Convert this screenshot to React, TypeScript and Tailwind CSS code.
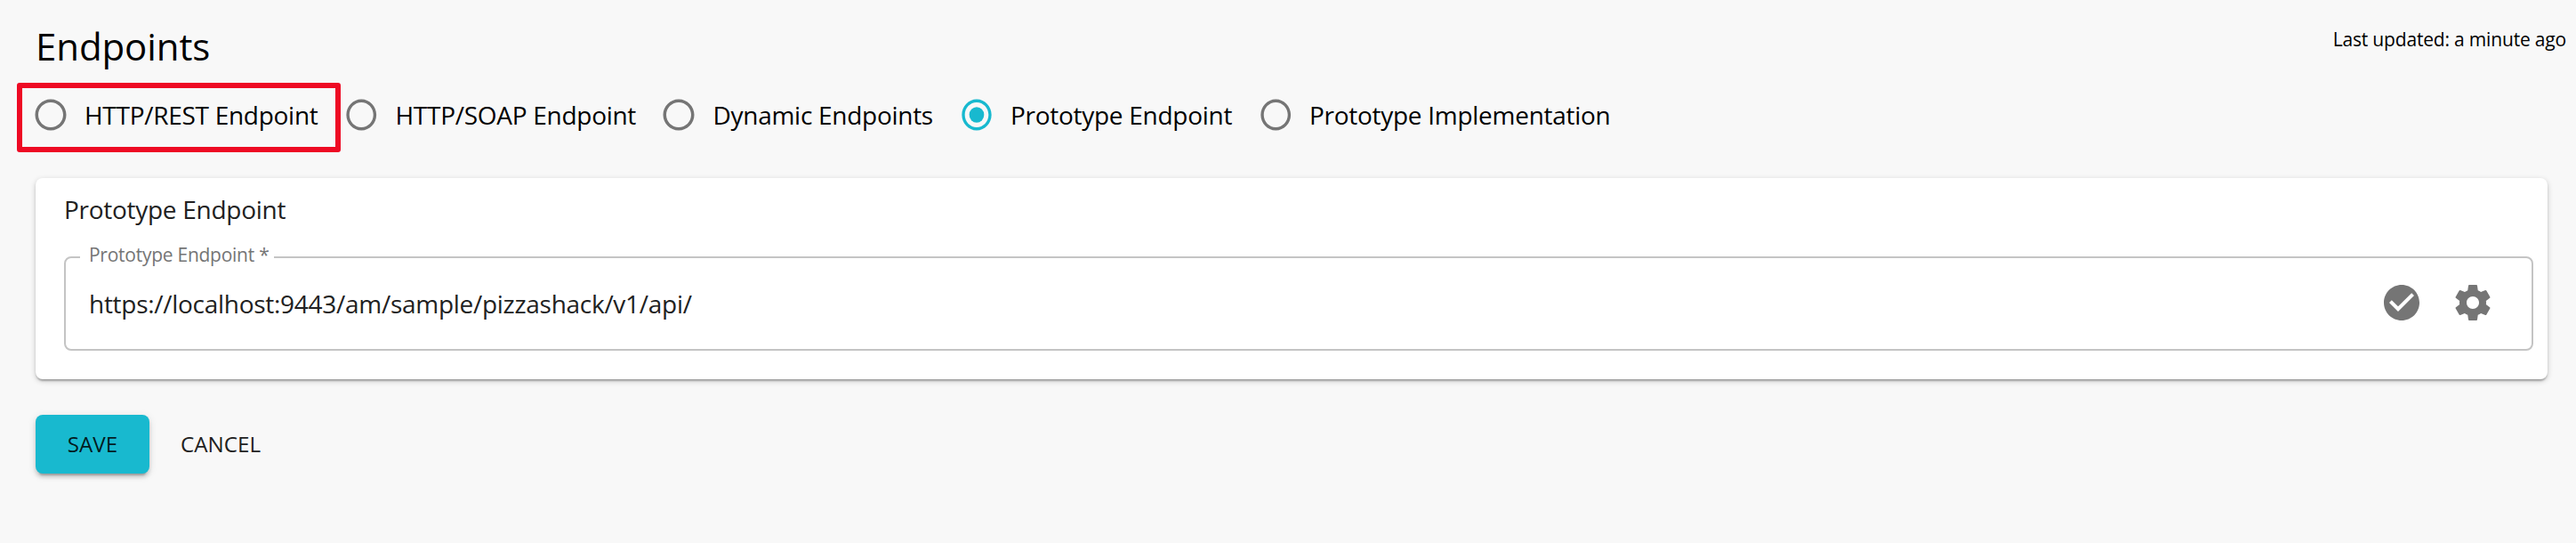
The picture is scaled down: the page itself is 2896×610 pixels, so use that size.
const endpointTypes = [
  { label: "HTTP/REST Endpoint", cell: "w-[349.5px]", ring: "w-[42px]", text: "pl-[17px]" },
  { label: "HTTP/SOAP Endpoint", cell: "w-[356.5px]", ring: "w-[40.5px]", text: "pl-[18.5px]" },
  { label: "Dynamic Endpoints", cell: "w-[336px]", ring: "w-[42px]", text: "pl-[17.5px]" },
  { label: "Prototype Endpoint", cell: "w-[335.5px]", ring: "w-[40px]", text: "pl-[18px]", selected: true },
  { label: "Prototype Implementation", cell: "w-[420px]", ring: "w-[40.5px]", text: "pl-[18px]" },
];

function RadioIcon({ selected, width }: { selected?: boolean; width: string }) {
  return (
    <svg
      viewBox="0 0 24 24"
      preserveAspectRatio="none"
      className={`${width} h-[42px] shrink-0 ${selected ? "fill-[#18b9cf]" : "fill-[#757575]"}`}
    >
      <path d="M12 2C6.48 2 2 6.48 2 12s4.48 10 10 10 10-4.48 10-10S17.52 2 12 2zm0 18c-4.42 0-8-3.58-8-8s3.58-8 8-8 8 3.58 8 8-3.58 8-8 8z" />
      {selected && <circle cx="12" cy="12" r="5" />}
    </svg>
  );
}

export default function App() {
  return (
    <div className="h-[610px] w-full overflow-hidden bg-[#f8f8f8] font-['Open_Sans',sans-serif] text-black">
      <header className="flex h-[93px] justify-between pr-[11px] pl-10">
        <h1 className="pt-[21px] text-[42px] leading-[62px] tracking-[-0.1px]">Endpoints</h1>
        <p className="pt-[29px] text-[21px] leading-[30px] tracking-[-0.18px]">Last updated: a minute ago</p>
      </header>

      <div className="relative flex h-[107px] pl-9" role="radiogroup">
        <div className="pointer-events-none absolute top-0 left-[19px] h-[78px] w-[364px] rounded-[3px] border-6 border-[#ee0a24]" />
        {endpointTypes.map((t) => (
          <label key={t.label} className={`flex h-[72px] shrink-0 items-center ${t.cell}`}>
            <RadioIcon selected={t.selected} width={t.ring} />
            <span className={`${t.text} text-[28px] leading-10 tracking-[-0.28px] whitespace-nowrap`}>{t.label}</span>
          </label>
        ))}
      </div>

      <section className="mr-8 ml-10 h-[226px] rounded-lg bg-white pr-4 pl-8 text-[#212121] shadow-[0_2px_6px_rgba(0,0,0,0.2),0_2px_2px_rgba(0,0,0,0.14),0_4px_2px_-2px_rgba(0,0,0,0.12)]">
        <h2 className="pt-[15px] text-[28px] leading-10 tracking-[-0.28px]">Prototype Endpoint</h2>
        <fieldset className="relative mt-[33px] flex h-[106px] items-center rounded-lg border-2 border-[#c4c4c4] pr-[42px] pl-[26px]">
          <span className="absolute -top-[19px] left-4 h-[30px] w-[218px] bg-white pl-2.5 text-[21px] leading-[30px] tracking-[-0.26px] whitespace-nowrap text-[#757575]">
            Prototype Endpoint *
          </span>
          <span className="grow text-[28px] leading-10 tracking-[-0.28px]">
            https://localhost:9443/am/sample/pizzashack/v1/api/
          </span>
          <svg viewBox="0 0 24 24" className="mr-8 size-12 -translate-y-px fill-[#757575]">
            <path d="M12 2C6.48 2 2 6.48 2 12s4.48 10 10 10 10-4.48 10-10S17.52 2 12 2zm-2 15l-5-5 1.41-1.41L10 14.17l7.59-7.59L19 8l-9 9z" />
          </svg>
          <svg viewBox="0 0 24 24" className="size-12 -translate-y-px fill-[#757575]">
            <path d="M19.43 12.98c.04-.32.07-.64.07-.98s-.03-.66-.07-.98l2.11-1.65c.19-.15.24-.42.12-.64l-2-3.46c-.12-.22-.39-.3-.61-.22l-2.49 1c-.52-.4-1.08-.73-1.69-.98l-.38-2.65C14.46 2.18 14.25 2 14 2h-4c-.25 0-.46.18-.49.42l-.38 2.65c-.61.25-1.17.59-1.69.98l-2.49-1c-.23-.09-.49 0-.61.22l-2 3.46c-.13.22-.07.49.12.64l2.11 1.65c-.04.32-.07.65-.07.98s.03.66.07.98l-2.11 1.65c-.19.15-.24.42-.12.64l2 3.46c.12.22.39.3.61.22l2.49-1c.52.4 1.08.73 1.69.98l.38 2.65c.03.24.24.42.49.42h4c.25 0 .46-.18.49-.42l.38-2.65c.61-.25 1.17-.59 1.69-.98l2.49 1c.23.09.49 0 .61-.22l2-3.46c.12-.22.07-.49-.12-.64l-2.11-1.65zM12 15.5c-1.93 0-3.5-1.57-3.5-3.5s1.57-3.5 3.5-3.5 3.5 1.57 3.5 3.5-1.57 3.5-3.5 3.5z" />
          </svg>
        </fieldset>
      </section>

      <div className="mt-10 flex pl-10 text-[24.2px] leading-[34px]">
        <button className="h-[66px] w-32 rounded-lg bg-[#18b9cf] text-black/87 shadow-[0_6px_2px_-4px_rgba(0,0,0,0.2),0_4px_4px_rgba(0,0,0,0.14),0_2px_10px_rgba(0,0,0,0.12)]">
          SAVE
        </button>
        <button className="ml-[35px] text-[#212121]">CANCEL</button>
      </div>
    </div>
  );
}
